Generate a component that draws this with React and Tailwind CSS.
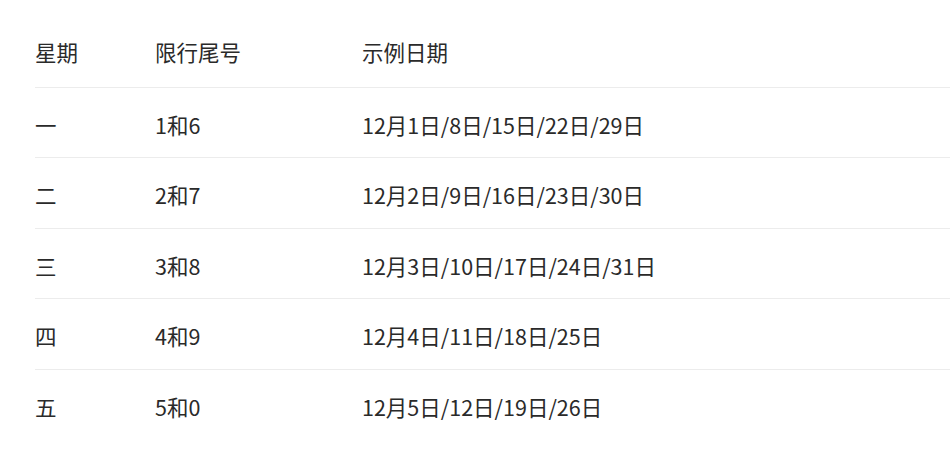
const ROWS = [
  { day: '一', tail: '1和6', dates: '12月1日/8日/15日/22日/29日' },
  { day: '二', tail: '2和7', dates: '12月2日/9日/16日/23日/30日' },
  { day: '三', tail: '3和8', dates: '12月3日/10日/17日/24日/31日' },
  { day: '四', tail: '4和9', dates: '12月4日/11日/18日/25日' },
  { day: '五', tail: '5和0', dates: '12月5日/12日/19日/26日' },
];

function Row({ cells, header, last, tall }) {
  return (
    <div
      className={
        'flex leading-[30px] ' +
        (header ? 'pt-[37px] pb-[20px] ' : tall ? 'pt-[22px] pb-[18px] ' : 'pt-[22px] pb-[17px] ') +
        (last ? '' : 'border-b border-[#ececec]')
      }
    >
      <div className="w-[120px] shrink-0">{cells[0]}</div>
      <div className="w-[207px] shrink-0">{cells[1]}</div>
      <div className="flex-1">{cells[2]}</div>
    </div>
  );
}

export default function App() {
  return (
    <div
      className="min-h-screen bg-white pl-[35px] text-[21.5px] text-[#2a2a2a]"
      style={{ fontFamily: '"Noto Sans CJK SC", "Noto Sans", sans-serif' }}
    >
      <Row header cells={['星期', '限行尾号', '示例日期']} />
      {ROWS.map((r, i) => (
        <Row
          key={r.day}
          cells={[r.day, r.tail, r.dates]}
          tall={i === 1 || i === 3}
          last={i === ROWS.length - 1}
        />
      ))}
    </div>
  );
}
